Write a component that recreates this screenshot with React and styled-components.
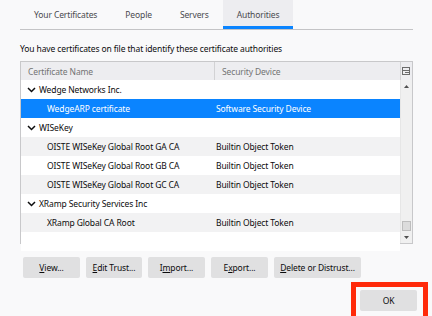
import React from 'react';
import styled, { createGlobalStyle } from 'styled-components';

const Global = createGlobalStyle`
    html, body {
        margin: 0;
        padding: 0;
        background: #f9f9fa;
    }
    body {
        font-family: "Noto Sans", "Open Sans", sans-serif;
        font-size: 8.5px;
        letter-spacing: -0.12px;
        color: #0c0c0d;
    }
`;

const Dialog = styled.div`
    width: 432px;
    height: 316px;
    box-sizing: border-box;
    padding: 0 19px 0 20px;
    display: flex;
    flex-direction: column;
    overflow: hidden;
`;

const Tabs = styled.div`
    display: flex;
    height: 29px;
    border-bottom: 1px solid #c4c4c6;
`;

const Tab = styled.div`
    padding: 0 14px;
    display: flex;
    align-items: center;
    color: #4a4a4f;
    background: ${p => (p.active ? '#ededf0' : 'transparent')};
    box-shadow: ${p => (p.active ? 'inset 0 -3px 0 #0a84ff' : 'none')};
`;

const Intro = styled.p`
    margin: 12px 0 6px;
    line-height: 13px;
`;

const Tree = styled.div`
    height: 183px;
    border: 1px solid #c8c8ca;
    background: #fff;
    display: flex;
    flex-direction: column;
    box-sizing: border-box;
`;

const Header = styled.div`
    display: grid;
    grid-template-columns: 194px 1fr 11px;
    height: 18px;
    background: #ededf0;
    color: #737373;
`;

const HeadCell = styled.div`
    display: flex;
    align-items: center;
    padding-left: ${p => p.pad || 7}px;
    border-right: ${p => (p.last ? 'none' : '1px solid #d2d2d4')};
`;

const Body = styled.div`
    flex: 1;
    display: flex;
    min-height: 0;
`;

const Rows = styled.div`
    flex: 1;
`;

const Row = styled.div`
    display: grid;
    grid-template-columns: 195px 1fr;
    height: 19px;
    align-items: center;
    background: ${p => (p.selected ? '#0a84ff' : p.odd ? '#f2f2f3' : '#fff')};
    color: ${p => (p.selected ? '#fff' : '#0c0c0d')};
`;

const NameCell = styled.div`
    display: flex;
    align-items: center;
    padding-left: ${p => (p.child ? 26 : 6)}px;
    white-space: nowrap;
`;

const Chevron = styled.svg`
    width: 9px;
    height: 6px;
    margin-right: 3px;
`;

const Scrollbar = styled.div`
    width: 11px;
    background: #f0f0f0;
    border-left: 1px solid #e6e6e6;
    display: flex;
    flex-direction: column;
    align-items: center;
`;

const Arrow = styled.div`
    height: 12px;
    display: flex;
    align-items: center;
    justify-content: center;
`;

const Track = styled.div`
    flex: 1;
    width: 100%;
    display: flex;
    flex-direction: column;
    justify-content: flex-end;
    align-items: center;
`;

const Thumb = styled.div`
    width: 9px;
    height: 10px;
    background: #dcdcdc;
    border: 1px solid #bdbdbd;
    box-sizing: border-box;
`;

const Buttons = styled.div`
    display: flex;
    gap: 6px;
    margin: 13px 0 0 3px;
`;

const Button = styled.div`
    height: 21px;
    width: ${p => p.w || 57}px;
    box-sizing: border-box;
    background: #e0e0e1;
    border-radius: 2px;
    display: flex;
    align-items: center;
    justify-content: center;
    color: #0c0c0d;
    white-space: nowrap;
    u {
        text-decoration-thickness: 1px;
        text-underline-offset: 1px;
    }
`;

const Footer = styled.div`
    display: flex;
    justify-content: flex-end;
    margin-top: 4px;
    margin-right: -15px;
`;

const Focus = styled.div`
    border: 5px solid #ff2a0a;
    padding: 3px 6px 0 4px;
    border-bottom: none;
    height: 34px;
    box-sizing: border-box;
`;

const rows = [
    { name: 'Wedge Networks Inc.', group: true },
    { name: 'WedgeARP certificate', device: 'Software Security Device', selected: true },
    { name: 'WISeKey', group: true },
    { name: 'OISTE WISeKey Global Root GA CA', device: 'Builtin Object Token' },
    { name: 'OISTE WISeKey Global Root GB CA', device: 'Builtin Object Token' },
    { name: 'OISTE WISeKey Global Root GC CA', device: 'Builtin Object Token' },
    { name: 'XRamp Security Services Inc', group: true },
    { name: 'XRamp Global CA Root', device: 'Builtin Object Token' },
    { name: '' },
];

const Down = () => (
    <Chevron viewBox="0 0 9 6">
        <path d="M1 1l3.5 3.5L8 1" fill="none" stroke="#0c0c0d" strokeWidth="1.5" />
    </Chevron>
);

const PickerIcon = () => (
    <svg width="9" height="9" viewBox="0 0 9 9">
        <rect x="0.5" y="0.5" width="7" height="7" fill="none" stroke="#6b6b6b" />
        <path d="M0.5 3.5h7M3 5.5h4" stroke="#6b6b6b" />
    </svg>
);

export default function App() {
    return (
        <>
            <Global />
            <Dialog>
                <Tabs>
                    <Tab>Your Certificates</Tab>
                    <Tab>People</Tab>
                    <Tab>Servers</Tab>
                    <Tab active>Authorities</Tab>
                </Tabs>
                <Intro>You have certificates on file that identify these certificate authorities</Intro>
                <Tree>
                    <Header>
                        <HeadCell>Certificate Name</HeadCell>
                        <HeadCell>Security Device</HeadCell>
                        <HeadCell last pad={1}><PickerIcon /></HeadCell>
                    </Header>
                    <Body>
                        <Rows>
                            {rows.map((r, i) => (
                                <Row key={i} odd={i % 2 === 1} selected={r.selected}>
                                    <NameCell child={!r.group}>
                                        {r.group && <Down />}
                                        {r.name}
                                    </NameCell>
                                    <div>{r.device}</div>
                                </Row>
                            ))}
                        </Rows>
                        <Scrollbar>
                            <Arrow>
                                <svg width="5" height="3" viewBox="0 0 5 3"><path d="M0 3L2.5 0 5 3z" fill="#505050" /></svg>
                            </Arrow>
                            <Track><Thumb /></Track>
                            <Arrow>
                                <svg width="5" height="3" viewBox="0 0 5 3"><path d="M0 0h5L2.5 3z" fill="#505050" /></svg>
                            </Arrow>
                        </Scrollbar>
                    </Body>
                </Tree>
                <Buttons>
                    <Button><span><u>V</u>iew...</span></Button>
                    <Button w={56}><span><u>E</u>dit Trust...</span></Button>
                    <Button><span>I<u>m</u>port...</span></Button>
                    <Button><span>E<u>x</u>port...</span></Button>
                    <Button w={87}><span><u>D</u>elete or Distrust...</span></Button>
                </Buttons>
                <Footer>
                    <Focus>
                        <Button w={57}>OK</Button>
                    </Focus>
                </Footer>
            </Dialog>
        </>
    );
}
